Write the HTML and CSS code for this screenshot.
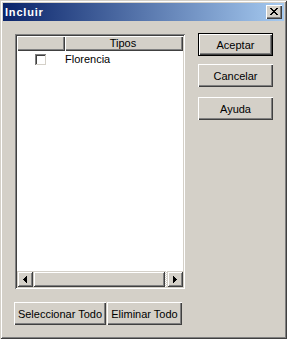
FILE: index.html
```html
<!DOCTYPE html>
<html>
<head>
<meta charset="utf-8">
<link rel="stylesheet" href="styles.css">
</head>
<body>
<div class="window">
  <div class="titlebar">
    <span class="title">Incluir</span>
    <div class="close">
      <svg width="8" height="7" viewBox="0 0 8 7" shape-rendering="crispEdges">
        <path fill="#000" d="M0 0h2v1h-2zM6 0h2v1h-2zM1 1h2v1h-2zM5 1h2v1h-2zM2 2h4v1h-4zM3 3h2v1h-2zM2 4h4v1h-4zM1 5h2v1h-2zM5 5h2v1h-2zM0 6h2v1h-2zM6 6h2v1h-2z"/>
      </svg>
    </div>
  </div>
  <div class="content">
    <div class="left">
      <div class="listbox">
        <div class="header">
          <div class="hcell hcell-check"></div>
          <div class="hcell hcell-name">Tipos</div>
        </div>
        <div class="rows">
          <div class="row">
            <span class="checkcell"><span class="check"></span></span>
            <span class="label">Florencia</span>
          </div>
        </div>
        <div class="hscroll">
          <div class="sbtn">
            <svg width="4" height="7" viewBox="0 0 4 7" shape-rendering="crispEdges"><path fill="#000" d="M3 0h1v7h-1zM2 1h1v5h-1zM1 2h1v3h-1zM0 3h1v1h-1z"/></svg>
          </div>
          <div class="thumb"></div>
          <div class="track"></div>
          <div class="sbtn">
            <svg width="4" height="7" viewBox="0 0 4 7" shape-rendering="crispEdges"><path fill="#000" d="M0 0h1v7h-1zM1 1h1v5h-1zM2 2h1v3h-1zM3 3h1v1h-1z"/></svg>
          </div>
        </div>
      </div>
      <div class="bottom-buttons">
        <div class="btn btn-sel">Seleccionar Todo</div>
        <div class="btn btn-elim">Eliminar Todo</div>
      </div>
    </div>
    <div class="right">
      <div class="btn btn-default">Aceptar</div>
      <div class="btn btn-cancel">Cancelar</div>
      <div class="btn btn-help">Ayuda</div>
    </div>
  </div>
</div>
</body>
</html>
```

FILE: styles.css
```css
* { box-sizing: border-box; }
html, body { margin: 0; padding: 0; }
body {
  background: #d4d0c8;
  font-family: "Liberation Sans", Arial, sans-serif;
  font-size: 11px;
  color: #000;
}
.window {
  width: 287px;
  height: 339px;
  padding: 3px;
  background: #d4d0c8;
  box-shadow: inset 1px 1px 0 #d4d0c8, inset -1px -1px 0 #404040, inset 2px 2px 0 #fff, inset -2px -2px 0 #808080;
}
.titlebar {
  height: 18px;
  display: flex;
  align-items: center;
  justify-content: space-between;
  padding: 0 2px 0 2px;
  background: linear-gradient(to right, #0a246a, #a6caf0);
}
.title {
  color: #fff;
  font-weight: bold;
  font-size: 11px;
  letter-spacing: 0.8px;
  line-height: 18px;
}
.close {
  width: 16px;
  height: 14px;
  display: flex;
  align-items: center;
  justify-content: center;
  background: #d4d0c8;
  box-shadow: inset 1px 1px 0 #fff, inset -1px -1px 0 #404040, inset -2px -2px 0 #808080;
  padding-bottom: 1px;
  padding-right: 1px;
}
.close svg { display: block; }
.content {
  display: flex;
  padding: 12px 0 0 11px;
}
.left {
  width: 171px;
  display: flex;
  flex-direction: column;
}
.listbox {
  margin: 1px 0 0 1px;
  width: 170px;
  height: 255px;
  background: #fff;
  padding: 2px;
  display: flex;
  flex-direction: column;
  box-shadow: inset 1px 1px 0 #808080, inset -1px -1px 0 #fff, inset 2px 2px 0 #404040, inset -2px -2px 0 #d4d0c8;
}
.header {
  display: flex;
  height: 15px;
  background: #d4d0c8;
}
.hcell {
  height: 15px;
  line-height: 14px;
  box-shadow: inset 1px 1px 0 #fff, inset -1px -1px 0 #404040, inset -2px -2px 0 #808080;
}
.hcell-check { width: 48px; }
.hcell-name {
  flex: 1;
  text-align: center;
  padding-right: 2px;
}
.rows {
  flex: 1;
}
.row {
  display: flex;
  align-items: center;
  height: 16px;
}
.checkcell {
  width: 48px;
  display: flex;
  padding-left: 18px;
}
.check {
  width: 11px;
  height: 11px;
  background: #fff;
  box-shadow: inset 1px 1px 0 #808080, inset -1px -1px 0 #d4d0c8, inset 2px 2px 0 #404040;
}
.label {
  padding-left: 0;
}
.hscroll {
  height: 16px;
  display: flex;
  background: #d4d0c8;
}
.sbtn, .thumb {
  height: 16px;
  background: #d4d0c8;
  box-shadow: inset 1px 1px 0 #d4d0c8, inset -1px -1px 0 #404040, inset 2px 2px 0 #fff, inset -2px -2px 0 #808080;
}
.sbtn {
  width: 16px;
  display: flex;
  align-items: center;
  justify-content: center;
}
.sbtn svg { display: block; }
.thumb { flex: 1; }
.track {
  width: 2px;
  background-image: repeating-conic-gradient(#fff 0 25%, #d4d0c8 0 50%);
  background-size: 2px 2px;
}
.bottom-buttons {
  display: flex;
  gap: 1px;
  margin-top: 13px;
}
.btn {
  height: 23px;
  display: flex;
  align-items: center;
  justify-content: center;
  background: #d4d0c8;
  box-shadow: inset 1px 1px 0 #fff, inset -1px -1px 0 #404040, inset -2px -2px 0 #808080;
}
.btn-sel { width: 92px; }
.btn-elim { width: 75px; }
.right {
  margin-left: 13px;
  display: flex;
  flex-direction: column;
}
.right .btn { width: 75px; }
.btn-default {
  box-shadow: inset 0 0 0 1px #000, inset 2px 2px 0 #fff, inset -2px -2px 0 #404040, inset -3px -3px 0 #808080;
}
.btn-cancel { margin-top: 8px; }
.btn-help { margin-top: 10px; }
```
